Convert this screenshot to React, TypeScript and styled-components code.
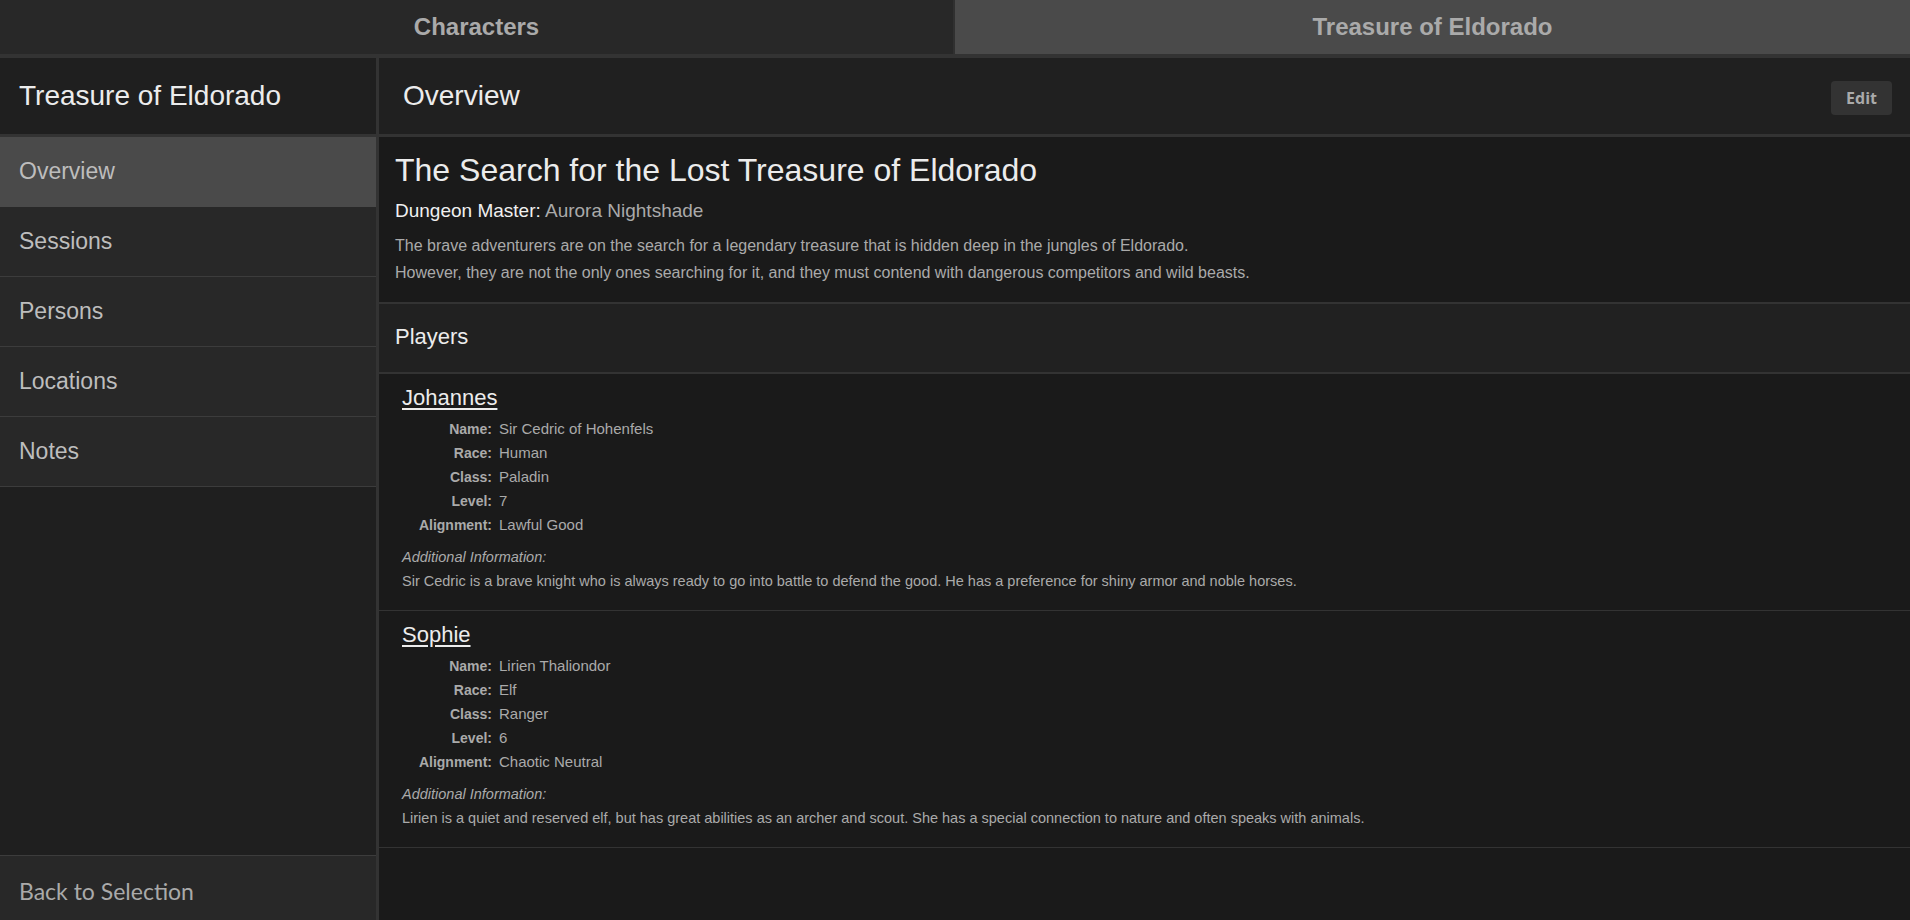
import React from "react";
import styled, { createGlobalStyle } from "styled-components";

const GlobalStyle = createGlobalStyle`
    html, body {
        margin: 0;
        padding: 0;
        background-color: #1a1a1a;
        font-family: "Liberation Sans", Arial, sans-serif;
    }
    * {
        box-sizing: border-box;
    }
`

//layout
const Page = styled.div`
    display: flex;
    flex-direction: column;
    height: 100vh;
    overflow: hidden;
`

const TabBar = styled.div`
    display: grid;
    grid-template-columns: 1fr 1fr;
    border-bottom: 4px solid #333333;
    flex-shrink: 0;
`

const Tab = styled.div<{ $active?: boolean }>`
    height: 54px;
    display: flex;
    align-items: center;
    justify-content: center;
    background-color: ${p => (p.$active ? "#4a4a4a" : "#282828")};
    border-right: ${p => (p.$active ? "none" : "2px solid #303030")};
    color: #aaaaaa;
    font-weight: bold;
    font-size: 24px;
`

const Body = styled.div`
    flex: 1;
    display: flex;
    min-height: 0;
`

const Sidebar = styled.nav`
    width: 379px;
    flex-shrink: 0;
    display: flex;
    flex-direction: column;
    background-color: #1f1f1f;
    border-right: 3px solid #333333;
`

const PanelHeader = styled.div<{ $bg?: string }>`
    height: 79px;
    flex-shrink: 0;
    display: flex;
    align-items: center;
    justify-content: space-between;
    background-color: ${p => p.$bg || "#1f1f1f"};
    border-bottom: 3px solid #333333;
    color: #ececec;
    font-size: 28px;
`

const SidebarTitle = styled.span`
    padding-left: 19px;
`

const NavItem = styled.div<{ $active?: boolean }>`
    height: 70px;
    display: flex;
    align-items: center;
    padding-left: 19px;
    background-color: ${p => (p.$active ? "#4a4a4a" : "#282828")};
    border-bottom: 1px solid ${p => (p.$active ? "#4a4a4a" : "#3c3c3c")};
    color: #bdbdbd;
    font-size: 23px;
`

const Spacer = styled.div`
    flex: 1;
`

const BackButton = styled.div`
    height: 65px;
    display: flex;
    align-items: center;
    padding-left: 19px;
    padding-top: 5px;
    background-color: #282828;
    border-top: 1px solid #3c3c3c;
    color: #aaaaaa;
    font-family: "Lato", "Open Sans", sans-serif;
    font-size: 23px;
`

const Main = styled.main`
    flex: 1;
    display: flex;
    flex-direction: column;
    background-color: #1a1a1a;
    overflow: hidden;
`

const MainTitle = styled.span`
    padding-left: 24px;
`

const EditButton = styled.button`
    margin-right: 18px;
    margin-top: 3px;
    height: 34px;
    padding: 0 15px;
    border: none;
    border-radius: 4px;
    background-color: #333333;
    color: #aaaaaa;
    font-family: "Open Sans", sans-serif;
    font-weight: bold;
    font-size: 16px;
`

const Intro = styled.section`
    padding: 14px 16px 16px;
    border-bottom: 2px solid #333333;
`

const CampaignTitle = styled.h1`
    margin: 0;
    font-size: 32px;
    line-height: 38px;
    font-weight: normal;
    color: #ececec;
`

const MasterLine = styled.div`
    margin-top: 10px;
    font-size: 19px;
    line-height: 24px;
    color: #f0f0f0;
`

const Muted = styled.span`
    color: #aaaaaa;
`

const Description = styled.p`
    margin: 9px 0 0;
    font-size: 16px;
    line-height: 27px;
    color: #aaaaaa;
`

const SectionHeader = styled.div`
    height: 70px;
    display: flex;
    align-items: center;
    padding-left: 16px;
    padding-bottom: 2px;
    background-color: #212121;
    border-bottom: 2px solid #333333;
    color: #ececec;
    font-size: 22px;
`

const PlayerCard = styled.div`
    padding: 10px 23px 17px;
    border-bottom: 1px solid #333333;
`

const PlayerName = styled.a`
    display: inline-block;
    font-size: 22px;
    line-height: 28px;
    color: #ececec;
    text-decoration: underline;
    text-underline-offset: 3px;
`

const Props = styled.div`
    display: grid;
    grid-template-columns: 90px auto;
    column-gap: 7px;
    margin-top: 5px;
    line-height: 24px;
`

const PropLabel = styled.span`
    text-align: right;
    font-weight: bold;
    font-size: 14px;
    color: #aaaaaa;
`

const PropValue = styled.span`
    font-size: 15px;
    color: #aaaaaa;
`

const InfoLabel = styled.div`
    margin-top: 8px;
    font-style: italic;
    font-size: 14.5px;
    line-height: 24px;
    color: #aaaaaa;
`

const InfoText = styled.div`
    font-size: 14.5px;
    line-height: 24px;
    color: #aaaaaa;
`

type Player = {
    player: string,
    name: string,
    race: string,
    cls: string,
    level: number,
    alignment: string,
    info: string,
}

const players: Player[] = [
    {
        player: "Johannes",
        name: "Sir Cedric of Hohenfels",
        race: "Human",
        cls: "Paladin",
        level: 7,
        alignment: "Lawful Good",
        info: "Sir Cedric is a brave knight who is always ready to go into battle to defend the good. He has a preference for shiny armor and noble horses.",
    },
    {
        player: "Sophie",
        name: "Lirien Thaliondor",
        race: "Elf",
        cls: "Ranger",
        level: 6,
        alignment: "Chaotic Neutral",
        info: "Lirien is a quiet and reserved elf, but has great abilities as an archer and scout. She has a special connection to nature and often speaks with animals.",
    },
]

const navItems = ["Overview", "Sessions", "Persons", "Locations", "Notes"]

const PlayerEntry = ({ p }: { p: Player }) => {
    const rows: [string, string | number][] = [
        ["Name:", p.name],
        ["Race:", p.race],
        ["Class:", p.cls],
        ["Level:", p.level],
        ["Alignment:", p.alignment],
    ]
    return (
        <PlayerCard>
            <PlayerName>{p.player}</PlayerName>
            <Props>
                {rows.map(([label, value]) => (
                    <React.Fragment key={label}>
                        <PropLabel>{label}</PropLabel>
                        <PropValue>{value}</PropValue>
                    </React.Fragment>
                ))}
            </Props>
            <InfoLabel>Additional Information:</InfoLabel>
            <InfoText>{p.info}</InfoText>
        </PlayerCard>
    )
}

export default function App() {
    return (
        <Page>
            <GlobalStyle />
            <TabBar>
                <Tab>Characters</Tab>
                <Tab $active>Treasure of Eldorado</Tab>
            </TabBar>
            <Body>
                <Sidebar>
                    <PanelHeader>
                        <SidebarTitle>Treasure of Eldorado</SidebarTitle>
                    </PanelHeader>
                    {navItems.map((item, i) => (
                        <NavItem key={item} $active={i === 0}>{item}</NavItem>
                    ))}
                    <Spacer />
                    <BackButton>Back to Selection</BackButton>
                </Sidebar>
                <Main>
                    <PanelHeader $bg="#202020">
                        <MainTitle>Overview</MainTitle>
                        <EditButton>Edit</EditButton>
                    </PanelHeader>
                    <Intro>
                        <CampaignTitle>The Search for the Lost Treasure of Eldorado</CampaignTitle>
                        <MasterLine>Dungeon Master: <Muted>Aurora Nightshade</Muted></MasterLine>
                        <Description>
                            The brave adventurers are on the search for a legendary treasure that is hidden deep in the jungles of Eldorado.
                            <br />
                            However, they are not the only ones searching for it, and they must contend with dangerous competitors and wild beasts.
                        </Description>
                    </Intro>
                    <SectionHeader>Players</SectionHeader>
                    {players.map(p => (
                        <PlayerEntry key={p.player} p={p} />
                    ))}
                </Main>
            </Body>
        </Page>
    )
}
